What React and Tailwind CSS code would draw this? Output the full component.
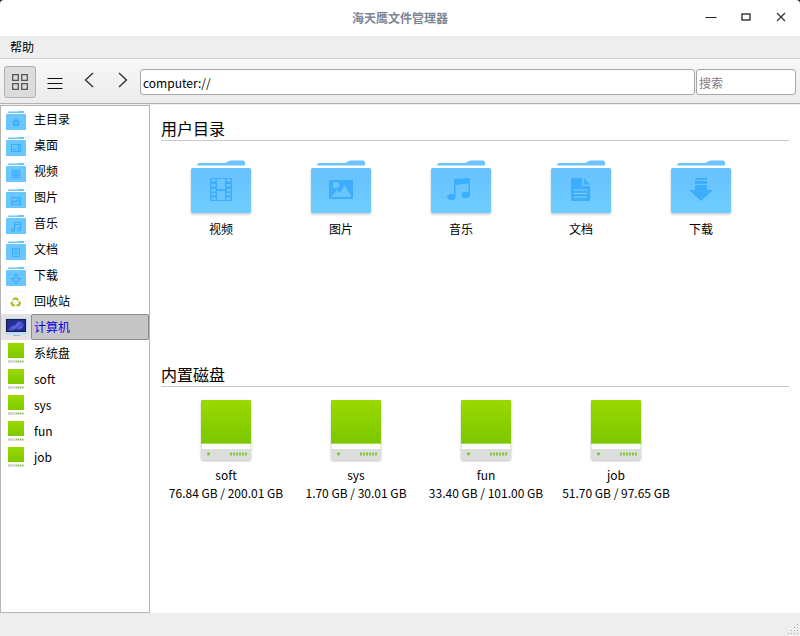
import { useState } from "react";

const BLUE = "#3daefd";

function SmallFolder({ children }) {
  return (
    <svg width="20" height="22" viewBox="0 -2 20 22" aria-hidden="true">
      <path d="M2 1.500h9.500l1-.5H18v2H2z" fill="#6cc6fe" />
      <rect x="0" y="4" width="20" height="16" rx="0.6" fill="#6ac6fe" />
      <g fill="none" stroke={BLUE} strokeWidth="1.200">{children}</g>
    </svg>
  );
}

function SmallDisk() {
  return (
    <svg width="20" height="20" viewBox="0 0 20 20" aria-hidden="true">
      <defs>
        <linearGradient id="smallDisk" x1="0" y1="0" x2="0" y2="1">
          <stop offset="0" stopColor="#99d900" />
          <stop offset="1" stopColor="#7fc900" />
        </linearGradient>
      </defs>
      <rect x="2" y="0" width="16" height="15" rx="0.5" fill="url(#smallDisk)" />
      <rect x="2" y="17" width="16" height="3" fill="#dcdede" />
      <path d="M3 18.500h1M10 18.500h1M12 18.500h1M14 18.500h1M16 18.500h1" stroke="#7fbf2a" />
    </svg>
  );
}

function TrashIcon() {
  return (
    <svg width="22" height="20" viewBox="0 0 22 20" aria-hidden="true">
      <path d="M0.5 0.5h21l-1.600 17q-.2 2-2 2H4q-1.700 0-2-2z" fill="#fefefe" stroke="#f5f5f5" />
      <g fill="none" stroke="#98c21b" strokeWidth="2">
        <path d="M8 9.200L9.500 7.500h2.300l1.200 2" />
        <path d="M14 10.500l.9 1.900-1.100 1.900h-2.300" />
        <path d="M9.800 14.300H7.700l-1.200-1.900.9-1.700" />
      </g>
    </svg>
  );
}

function ComputerIcon() {
  return (
    <svg width="22" height="22" viewBox="0 0 22 22" aria-hidden="true">
      <rect x="0" y="2" width="22" height="17" rx="1" fill="#bfe0f4" />
      <rect x="1" y="3" width="20" height="13" fill="#151b50" />
      <rect x="2" y="4" width="18" height="11" fill="#262e92" />
      <path d="M3 14l3-4 4-1 2-3 4-1 3 3-1 3-4 3-3-1-4 2z" fill="#444cc9" />
      <path d="M6 12l5-3 3-3 2 1-4 4-4 2zM14 11l4-2-1 3-3 1z" fill="#6268da" />
      <rect x="8" y="19" width="7" height="1" fill="#94bad0" />
    </svg>
  );
}

const places = [
  { name: "主目录", icon: <SmallFolder><path d="M10 8.500l5 4h-2v3.500H7v-3.500H5z" fill={BLUE} stroke="none" /><rect x="9" y="12" width="2" height="2" fill="#6ac6fe" stroke="none" /></SmallFolder> },
  { name: "桌面", icon: <SmallFolder><path d="M5.500 8.500h9v7h-9zM12.500 8.500v7M7 13.500h4" /></SmallFolder> },
  { name: "视频", icon: <SmallFolder><path d="M6.500 8v8.500M9 8v8.500M11 8v8.500M13.500 8v8.500M6 8.500h8M6 11h8M6 13.500h8M6 16h8" /></SmallFolder> },
  { name: "图片", icon: <SmallFolder><path d="M5.500 9.500h9v7h-9zM6 15l2.500-2.500 1.500 2 2-3.500 2 4" /></SmallFolder> },
  { name: "音乐", icon: <SmallFolder><path d="M8.500 16V8.500h6V15M8.500 10.500h6" /><circle cx="7" cy="16" r="1.500" /><circle cx="13" cy="15.500" r="1.500" /></SmallFolder> },
  { name: "文档", icon: <SmallFolder><path d="M6.500 8.500h7v8h-7zM8 10.500h3M8 12.500h4M8 14.500h4" /></SmallFolder> },
  { name: "下载", icon: <SmallFolder><path d="M8.500 8.500h3v4h3L10 17 5.500 12.500h3z" /></SmallFolder> },
  { name: "回收站", icon: <TrashIcon /> },
  { name: "计算机", icon: <ComputerIcon /> },
  { name: "系统盘", icon: <SmallDisk /> },
  { name: "soft", icon: <SmallDisk /> },
  { name: "sys", icon: <SmallDisk /> },
  { name: "fun", icon: <SmallDisk /> },
  { name: "job", icon: <SmallDisk /> },
];

function Folder({ children }) {
  return (
    <svg width="64" height="60" viewBox="0 0 64 60" aria-hidden="true">
      <defs>
        <linearGradient id="folder" x1="0" y1="0" x2="0" y2="1">
          <stop offset="0" stopColor="#68c1fe" />
          <stop offset="1" stopColor="#6ecdff" />
        </linearGradient>
        <filter id="folderShadow" x="-10%" y="-10%" width="120%" height="130%">
          <feDropShadow dx="0" dy="1.500" stdDeviation="1.300" floodColor="#000" floodOpacity="0.220" />
        </filter>
      </defs>
      <path d="M8 5.500Q8.300 3 10 3h25q2 0 3.500-1.200T42 .500h12q2 0 2 2v3z" fill="#6cc4fe" />
      <rect x="2" y="8" width="60" height="45" rx="1.500" fill="url(#folder)" filter="url(#folderShadow)" />
      {children}
    </svg>
  );
}

const folders = [
  {
    name: "视频",
    icon: (
      <>
        <rect x="21" y="18" width="22" height="23" rx="1" fill={BLUE} />
        <g fill="#6ac5fe">
          <rect x="28" y="19" width="8" height="10" />
          <rect x="28" y="31" width="8" height="9" />
          {[19, 24, 29, 33, 37.5].map((y) => (
            <g key={y}>
              <rect x="22.500" y={y} width="4" height="2.500" />
              <rect x="37.500" y={y} width="4" height="2.500" />
            </g>
          ))}
        </g>
      </>
    ),
  },
  {
    name: "图片",
    icon: (
      <>
        <rect x="20" y="20" width="24" height="19" fill={BLUE} />
        <circle cx="27" cy="25" r="3.200" fill="#6ac5fe" />
        <path d="M22 37l6-7 3 3 4.500-8 7 12z" fill="#6ac5fe" />
      </>
    ),
  },
  {
    name: "音乐",
    icon: (
      <g fill={BLUE}>
        <path d="M25 19l16-1v17h-1.500V23.500L26.500 25v12H25z" />
        <ellipse cx="22.300" cy="37" rx="4.200" ry="3" />
        <ellipse cx="36.800" cy="35" rx="4.200" ry="3.200" />
      </g>
    ),
  },
  {
    name: "文档",
    icon: (
      <>
        <path d="M22 18h11v8h8v14q0 1-1 1H23q-1 0-1-1zM35 18l6 6.500h-6z" fill={BLUE} />
        <path d="M25 30h13M25 33.500h13M25 37h13" stroke="#83d0ff" />
      </>
    ),
  },
  {
    name: "下载",
    icon: (
      <g fill={BLUE}>
        <rect x="26" y="18" width="12" height="2" rx=".5" />
        <rect x="26" y="21" width="12" height="3" />
        <path d="M26 25h12v5h6L32 41 20 30h6z" />
      </g>
    ),
  },
];

function Disk() {
  return (
    <svg width="56" height="66" viewBox="0 0 56 66" aria-hidden="true">
      <defs>
        <linearGradient id="disk" x1="0" y1="0" x2="0" y2="1">
          <stop offset="0" stopColor="#9bd900" />
          <stop offset="1" stopColor="#7bc700" />
        </linearGradient>
        <filter id="diskShadow" x="-10%" y="-10%" width="120%" height="120%">
          <feDropShadow dx="0" dy="1" stdDeviation="1" floodColor="#000" floodOpacity="0.250" />
        </filter>
      </defs>
      <rect x="3" y="2" width="50" height="60" rx="2" fill="#dcdddd" filter="url(#diskShadow)" />
      <rect x="3" y="45" width="50" height="6" fill="#e4f3cf" />
      <rect x="4" y="46" width="48" height="5" fill="#fff" />
      <rect x="3" y="2" width="50" height="44" rx="1" fill="url(#disk)" />
      <path d="M4 45.500h48" stroke="#a7dd56" />
      <circle cx="10.500" cy="56" r="1.400" fill="#6fc414" />
      <path d="M33 54.500v3M36 54.500v3M39 54.500v3M42 54.500v3M45 54.500v3M48 54.500v3" stroke="#86ca3b" strokeWidth="2" />
    </svg>
  );
}

const disks = [
  { name: "soft", size: "76.84 GB / 200.01 GB" },
  { name: "sys", size: "1.70 GB / 30.01 GB" },
  { name: "fun", size: "33.40 GB / 101.00 GB" },
  { name: "job", size: "51.70 GB / 97.65 GB" },
];

function TitleBar() {
  return (
    <header className="grid h-9 shrink-0 grid-cols-[1fr_auto_1fr] items-center rounded-t-sm bg-white">
      <h1 className="col-start-2 text-[12px] font-bold text-[#7c8595]">海天鹰文件管理器</h1>
      <div className="flex justify-end gap-[19px] pb-[2px] pr-[11px]">
        <button aria-label="最小化" className="flex h-4 w-4 items-center justify-center">
          <svg width="12" height="12"><path d="M.5 6.500h11" stroke="#222" /></svg>
        </button>
        <button aria-label="最大化" className="flex h-4 w-4 items-center justify-center">
          <svg width="10" height="8"><rect x="1" y="1" width="8" height="6" fill="none" stroke="#111" strokeWidth="1.200" /></svg>
        </button>
        <button aria-label="关闭" className="flex h-4 w-4 items-center justify-center">
          <svg width="10" height="10"><path d="M1 1l8 8M9 1L1 9" stroke="#333" strokeWidth="1.200" /></svg>
        </button>
      </div>
    </header>
  );
}

function ToolBar() {
  const [path, setPath] = useState("computer://");
  return (
    <div className="flex h-[45px] shrink-0 items-center border-b border-[#b0b0b0] bg-linear-to-b from-[#f8f8f8] to-[#ececec] px-1 pt-[2px]">
      <button aria-label="图标视图" aria-pressed="true" className="flex h-8 w-8 items-center justify-center rounded-[3px] border border-[#b0b0b0] bg-[#dcdcdc]">
        <svg width="16" height="16" fill="none" stroke="#555" strokeWidth="1.300">
          <path d="M.7.700h5.600v5.600H.7zM9.700.700h5.600v5.600H9.700zM.7 9.700h5.600v5.600H.7zM9.700 9.700h5.600v5.600H9.700z" />
        </svg>
      </button>
      <button aria-label="列表视图" className="ml-[3px] flex h-8 w-8 items-center justify-center">
        <svg width="16" height="16"><path d="M.5 4.500h15M.5 9.500h15M.5 14.500h15" stroke="#111" strokeWidth="1.200" /></svg>
      </button>
      <button aria-label="后退" className="ml-[2px] flex h-8 w-8 items-center justify-center">
        <svg width="10" height="16" className="mb-1"><path d="M9 1L1.500 8 9 15" fill="none" stroke="#333" strokeWidth="1.400" /></svg>
      </button>
      <button aria-label="前进" className="ml-[2px] mr-[1px] flex h-8 w-8 items-center justify-center">
        <svg width="10" height="16" className="mb-1"><path d="M1 1l7.500 7L1 15" fill="none" stroke="#333" strokeWidth="1.400" /></svg>
      </button>
      <input
        aria-label="位置"
        value={path}
        onChange={(e) => setPath(e.target.value)}
        className="h-[26px] min-w-0 flex-1 rounded-[3px] border border-[#a6a6a6] bg-white px-[2px] text-[12px] text-black"
      />
      <input
        aria-label="搜索"
        placeholder="搜索"
        className="ml-[1px] h-[26px] w-[100px] rounded-[3px] border border-[#a6a6a6] bg-white px-[2px] text-[12px] text-black placeholder:text-[#808080]"
      />
    </div>
  );
}

function Sidebar({ selected, onSelect }) {
  return (
    <nav className="w-[150px] shrink-0 border border-[#b4b4b4] bg-white">
      <ul>
        {places.map((place) => (
          <li key={place.name}>
            <button
              onClick={() => onSelect(place.name)}
              className={`flex h-[26px] w-full items-stretch text-left ${place.name === selected ? "bg-[#e2e2e2]" : ""}`}
            >
              <span className="flex w-[30px] items-center justify-center">{place.icon}</span>
              <span
                className={`flex flex-1 items-center border pl-[2px] ${
                  place.name === selected
                    ? "rounded-[2px] border-[#8c8c8c] bg-[#c6c6c6] text-[#0a00e6]"
                    : "border-transparent"
                }`}
              >
                {place.name}
              </span>
            </button>
          </li>
        ))}
      </ul>
    </nav>
  );
}

export default function App() {
  const [selected, setSelected] = useState("计算机");
  return (
    <div className="flex min-h-screen flex-col bg-[#1b1f3d] font-['Noto_Sans_CJK_SC',sans-serif] text-[12px] leading-[18px] text-black">
      <TitleBar />
      <div className="flex h-[23px] shrink-0 items-center border-b border-[#d0d0d0] bg-[#eeeeee] pl-[10px]">
        <button>帮助</button>
      </div>
      <ToolBar />
      <div className="flex flex-1 border-t border-t-[#f0f0f0] bg-white">
        <Sidebar selected={selected} onSelect={setSelected} />
        <main className="min-w-0 flex-1 px-[11px] pt-[11px]">
          <section className="min-h-[246px]">
            <h2 className="border-b border-[#c8c8c8] text-[16px] leading-6">用户目录</h2>
            <ul className="flex flex-wrap pt-[19px]">
              {folders.map((folder) => (
                <li key={folder.name} className="w-[120px]">
                  <button className="flex w-full flex-col items-center">
                    <Folder>{folder.icon}</Folder>
                    <span>{folder.name}</span>
                  </button>
                </li>
              ))}
            </ul>
          </section>
          <section>
            <h2 className="border-b border-[#c8c8c8] text-[16px] leading-6">内置磁盘</h2>
            <ul className="flex flex-wrap pt-[11px]">
              {disks.map((disk) => (
                <li key={disk.name} className="w-[130px]">
                  <button className="flex w-full flex-col items-center">
                    <Disk />
                    <span className="mt-[2px]">{disk.name}</span>
                    <span className="whitespace-nowrap">{disk.size}</span>
                  </button>
                </li>
              ))}
            </ul>
          </section>
        </main>
      </div>
      <footer className="flex h-[23px] shrink-0 items-end justify-end bg-[#eeeeee] pb-[1px] pr-[1px]">
        <svg width="12" height="12" fill="#a8a8a8" aria-hidden="true">
          <path d="M10 1h1v1h-1zM7 4h1v1H7zM10 4h1v1h-1zM4 7h1v1H4zM7 7h1v1H7zM10 7h1v1h-1zM1 10h1v1H1zM4 10h1v1H4zM7 10h1v1H7zM10 10h1v1h-1z" />
        </svg>
      </footer>
    </div>
  );
}
